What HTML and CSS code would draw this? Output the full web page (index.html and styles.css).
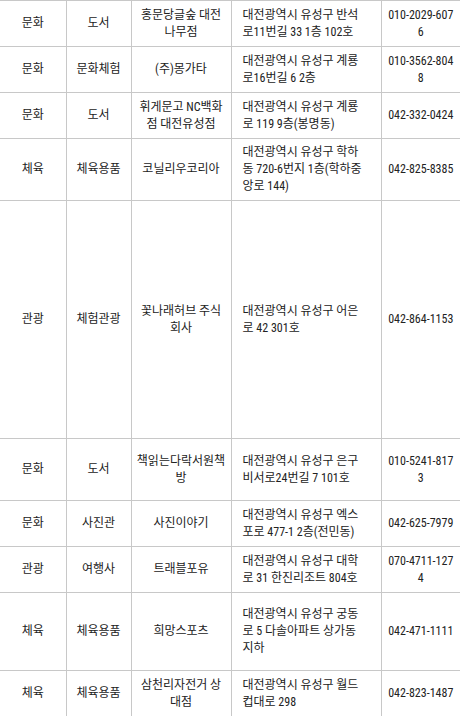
FILE: index.html
```html
<!DOCTYPE html>
<html lang="ko">
<head>
<meta charset="utf-8">
<title>가맹점 목록</title>
<link rel="stylesheet" href="styles.css">
</head>
<body>
<table class="list">
  <colgroup>
    <col class="c1"><col class="c2"><col class="c3"><col class="c4"><col class="c5">
  </colgroup>
  <tbody>
    <tr class="h46"><td>문화</td><td>도서</td><td class="name">홍문당글숲 대전 나무점</td><td class="addr">대전광역시 유성구 반석로11번길 33 1층 102호</td><td class="tel">010-2029-6076</td></tr>
    <tr class="h46"><td>문화</td><td>문화체험</td><td class="name">(주)몽가타</td><td class="addr">대전광역시 유성구 계룡로16번길 6 2층</td><td class="tel">010-3562-8048</td></tr>
    <tr class="h46"><td>문화</td><td>도서</td><td class="name">휘게문고 NC백화점 대전유성점</td><td class="addr">대전광역시 유성구 계룡로 119 9층(봉명동)</td><td class="tel">042-332-0424</td></tr>
    <tr class="h62"><td>체육</td><td>체육용품</td><td class="name">코닐리우코리아</td><td class="addr">대전광역시 유성구 학하동 720-6번지 1층(학하중앙로 144)</td><td class="tel">042-825-8385</td></tr>
    <tr class="h238"><td>관광</td><td>체험관광</td><td class="name">꽃나래허브 주식회사</td><td class="addr">대전광역시 유성구 어은로 42 301호</td><td class="tel">042-864-1153</td></tr>
    <tr class="h62"><td>문화</td><td>도서</td><td class="name">책읽는다락서원책방</td><td class="addr">대전광역시 유성구 은구비서로24번길 7 101호</td><td class="tel">010-5241-8173</td></tr>
    <tr class="h46"><td>문화</td><td>사진관</td><td class="name">사진이야기</td><td class="addr">대전광역시 유성구 엑스포로 477-1 2층(전민동)</td><td class="tel">042-625-7979</td></tr>
    <tr class="h46"><td>관광</td><td>여행사</td><td class="name">트래블포유</td><td class="addr">대전광역시 유성구 대학로 31 한진리조트 804호</td><td class="tel">070-4711-1274</td></tr>
    <tr class="h78"><td>체육</td><td>체육용품</td><td class="name">희망스포츠</td><td class="addr">대전광역시 유성구 궁동로 5 다솔아파트 상가동 지하</td><td class="tel">042-471-1111</td></tr>
    <tr class="h46"><td>체육</td><td>체육용품</td><td class="name">삼천리자전거 상대점</td><td class="addr">대전광역시 유성구 월드컵대로 298</td><td class="tel">042-823-1487</td></tr>
  </tbody>
</table>
</body>
</html>
```
FILE: styles.css
```css
html, body {
  margin: 0;
  padding: 0;
  background: #ffffff;
}

.list {
  width: 460px;
  table-layout: fixed;
  border-collapse: collapse;
  font-family: "Roboto Condensed", "Noto Sans CJK KR", sans-serif;
  font-size: 12px;
  line-height: 17px;
  color: #222222;
}

.c1 { width: 66px; }
.c2 { width: 65px; }
.c3 { width: 100px; }
.c4 { width: 150px; }
.c5 { width: 79px; }

.list td {
  border: 1px solid #c8c8c8;
  padding: 4px 5px;
  text-align: center;
  vertical-align: middle;
}

.list td:first-child { border-left: none; }
.list td:last-child { border-right: none; }

.list td.addr {
  text-align: left;
  padding: 4px 17px 4px 11px;
}

.list td.tel {
  padding: 4px 5px;
  word-break: break-all;
}

.h46 { height: 46px; }
.h62 { height: 62px; }
.h78 { height: 78px; }
.h238 { height: 238px; }
```
